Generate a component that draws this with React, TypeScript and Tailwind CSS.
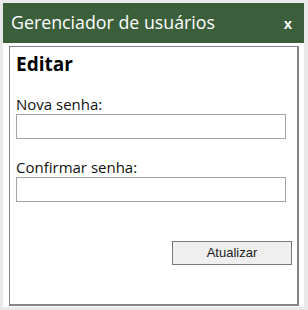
import React from 'react';

export default function App() {
  return (
    <div className="w-[308px] h-[310px] bg-[#e9e9e9] pt-[3px] pl-[3px] pr-[4px] pb-[3px]" style={{ fontFamily: '"Open Sans", "Noto Sans", sans-serif' }}>
      <div className="h-full bg-white flex flex-col">
        <div className="h-[40px] bg-[#3b5e3b] flex items-center justify-between pl-[8px] pr-[12px] text-white">
          <span className="text-[17.8px] leading-none">Gerenciador de usuários</span>
          <span className="text-[15px] font-bold leading-none" style={{ fontFamily: '"Liberation Sans", sans-serif' }}>x</span>
        </div>
        <div className="flex-1 mt-[3px] ml-[6px] mr-[5px] mb-[1px] border-t border-l border-r-2 border-b-2 border-[#858585] pl-[6px] pr-[11px] pt-[4px] flex flex-col">
          <h1 className="text-[19px] font-bold leading-[26px] text-black">Editar</h1>
          <label className="mt-[17px] text-[15px] leading-[20px] text-[#111]">Nova senha:</label>
          <input type="password" className="h-[25px] w-full border border-[#a5a5a5] bg-white outline-none" />
          <label className="mt-[18px] text-[15px] leading-[20px] text-[#111]">Confirmar senha:</label>
          <input type="password" className="h-[25px] w-full border border-[#a5a5a5] bg-white outline-none" />
          <div className="flex justify-end mt-[39px] -mr-[6px]">
            <button className="w-[120px] h-[24px] bg-[#efefef] border border-[#7a7a7a] text-[13px] text-[#1a1a1a]" style={{ fontFamily: '"Liberation Sans", Arial, sans-serif' }}>
              Atualizar
            </button>
          </div>
        </div>
      </div>
    </div>
  );
}
